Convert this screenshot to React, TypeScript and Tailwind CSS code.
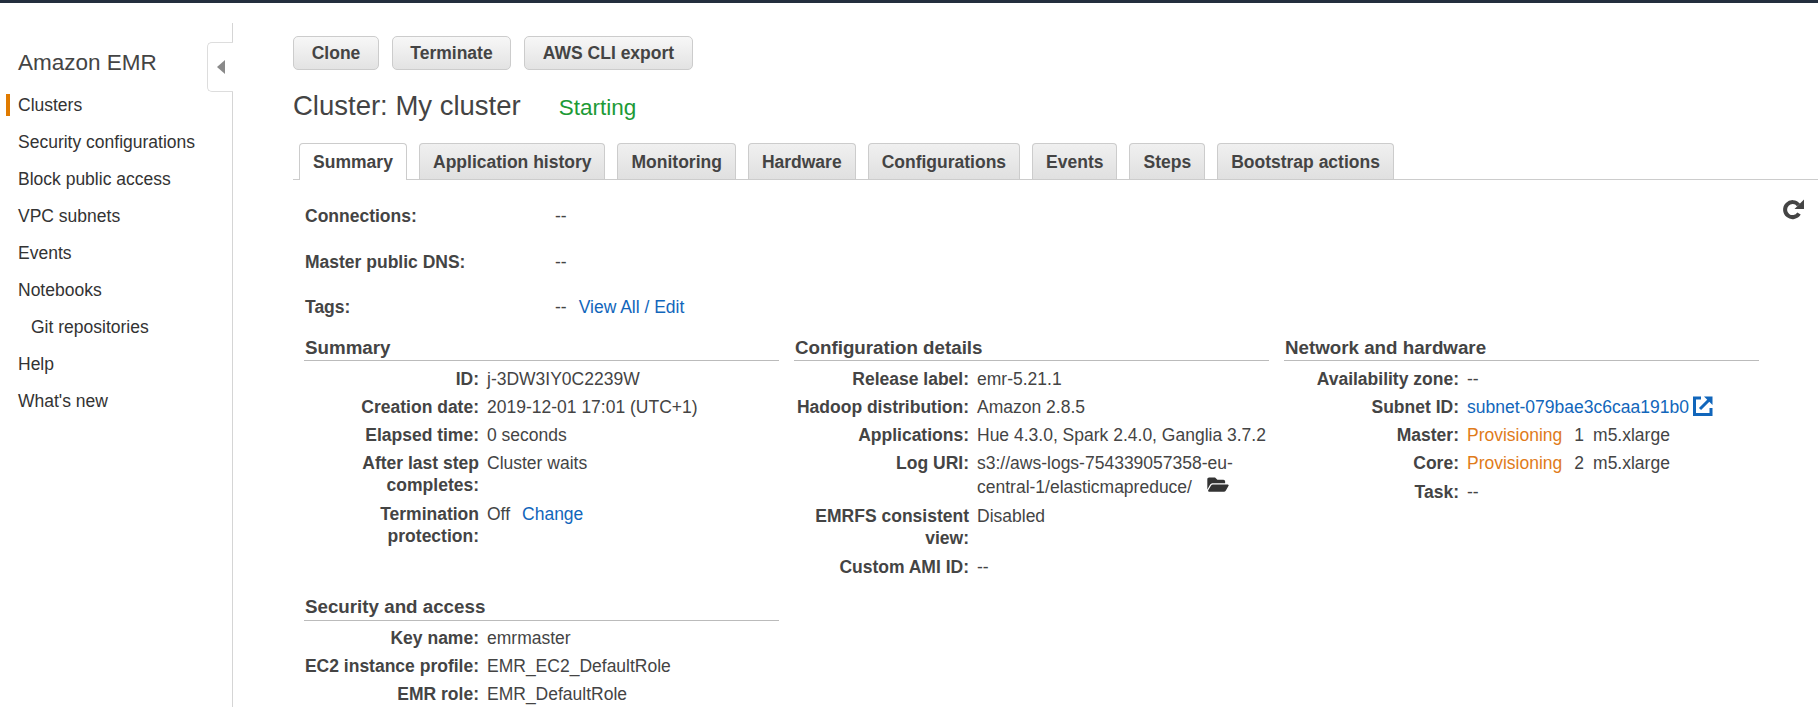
import { FaFolderOpen } from "react-icons/fa";
import type { ReactNode } from "react";

const navItems = ["Security configurations", "Block public access", "VPC subnets", "Events", "Notebooks"];
const tabs = ["Application history", "Monitoring", "Hardware", "Configurations", "Events", "Steps", "Bootstrap actions"];

function Row({ label, wrapped, children }: { label: ReactNode; wrapped?: boolean; children: ReactNode }) {
  return (
    <div className={`flex leading-[22px] ${wrapped ? "pb-[7px]" : "pb-[6px]"}`}>
      <div className="w-[175px] shrink-0 text-right font-bold">{label}</div>
      <div className="ml-[8px] min-w-0 flex-1">{children}</div>
    </div>
  );
}

function Section({ title, tall, children }: { title: string; tall?: boolean; children: ReactNode }) {
  return (
    <section>
      <h3 className={`${tall ? "h-[25px]" : "h-[24px]"} border-b border-[#bbbbbb] pl-px text-[18.75px] leading-[22px] font-bold`}>{title}</h3>
      <div className={tall ? "pt-[6px]" : "pt-[7px]"}>{children}</div>
    </section>
  );
}

function Button({ children, width }: { children: ReactNode; width: string }) {
  return (
    <button className={`h-[34px] ${width} rounded-[5px] border border-[#cccccc] bg-gradient-to-b from-[#f7f7f7] to-[#e3e3e3] text-[17.5px] font-bold text-[#444444]`}>
      {children}
    </button>
  );
}

function RefreshIcon() {
  return (
    <svg viewBox="0 0 22 22" className="mt-[18px] h-[22px] w-[22px] text-[#444444]">
      <path d="M16.5 7 A7.5 7.5 0 1 0 17 15.5" fill="none" stroke="currentColor" strokeWidth="4" />
      <polygon points="22,1.5 22,11 12.5,11" fill="currentColor" />
    </svg>
  );
}

function ExternalIcon() {
  return (
    <svg viewBox="0 0 20 20" className="ml-[4px] inline h-[20px] w-[20px] align-[-3px] text-[#1166bb]">
      <path d="M8 2 H1.5 V18.5 H18 V12" fill="none" stroke="currentColor" strokeWidth="3" />
      <path d="M7 13 L17 3" fill="none" stroke="currentColor" strokeWidth="3" />
      <polygon points="11,0.5 19.5,0.5 19.5,9" fill="currentColor" />
    </svg>
  );
}

export default function App() {
  return (
    <div className="flex h-[707px] flex-col overflow-hidden bg-white font-['Liberation_Sans',Arial,sans-serif] text-[17.5px] leading-[22px] text-[#444444]">
      <div className="h-[3px] shrink-0 bg-[#232f3e]" />
      <div className="flex flex-1">
        {/* Sidebar */}
        <aside className="relative mt-[20px] w-[233px] shrink-0 border-r border-[#d5d5d5]">
          <div className="absolute top-[19px] -right-px flex h-[50px] w-[26px] items-center justify-center rounded-l-[5px] border border-r-0 border-[#dddddd] bg-white">
            <div className="h-0 w-0 border-y-[7px] border-r-[8px] border-y-transparent border-r-[#8a8a8a]" />
          </div>
          <h2 className="mt-[25px] pl-[18px] text-[22.5px] leading-[30px] text-[#444444]">Amazon EMR</h2>
          <nav className="mt-[8px] text-[#333333]">
            <div className="flex h-[37px] items-center">
              <span className="ml-[6px] h-[22px] w-[4px] bg-[#e07b00]" />
              <span className="ml-[8px]">Clusters</span>
            </div>
            {navItems.map((item) => (
              <div key={item} className="flex h-[37px] items-center pl-[18px]">{item}</div>
            ))}
            <div className="flex h-[37px] items-center pl-[31px]">Git repositories</div>
            <div className="flex h-[37px] items-center pl-[18px]">Help</div>
            <div className="flex h-[37px] items-center pl-[18px]">What's new</div>
          </nav>
        </aside>

        {/* Main */}
        <main className="min-w-0 flex-1 pl-[60px]">
          <div className="mt-[33px] flex gap-[13px]">
            <Button width="w-[86px]">Clone</Button>
            <Button width="w-[119px]">Terminate</Button>
            <Button width="w-[169px]">AWS CLI export</Button>
          </div>
          <div className="mt-[19px] flex items-baseline">
            <h1 className="text-[27.5px] leading-[34px] font-normal">Cluster: My cluster</h1>
            <span className="ml-[38px] text-[22.5px] leading-[34px] text-[#1d9a36]">Starting</span>
          </div>
          <div className="mt-[18px] flex h-[37px] gap-[12px] border-b border-[#cccccc] pl-[6px]">
            <div className="relative z-10 flex h-[37px] w-[108px] items-center justify-center rounded-t-[4px] border border-b-0 border-[#cccccc] bg-white font-bold">Summary</div>
            {tabs.map((tab) => (
              <div key={tab} className="flex h-[36px] items-center rounded-t-[4px] border border-b-0 border-[#cccccc] bg-gradient-to-b from-[#f0f0f0] to-[#e0e0e0] px-[13px] font-bold whitespace-nowrap">
                {tab}
              </div>
            ))}
          </div>

          <div className="pl-[11px]">
            <div className="flex justify-between pr-[14px]">
              <div className="pt-[25px] pl-px">
                <div className="flex h-[46px]"><span className="w-[250px] font-bold">Connections:</span><span>--</span></div>
                <div className="flex h-[45px]"><span className="w-[250px] font-bold">Master public DNS:</span><span>--</span></div>
                <div className="flex h-[45px]"><span className="w-[250px] font-bold">Tags:</span><span>--</span><a className="ml-[12px] text-[#1166bb]">View All / Edit</a></div>
              </div>
              <RefreshIcon />
            </div>

            <div className="mt-[-4px] grid grid-cols-[475px_475px_475px] gap-x-[15px]">
              <div>
                <Section title="Summary">
                  <Row label="ID:">j-3DW3IY0C2239W</Row>
                  <Row label="Creation date:">2019-12-01 17:01 (UTC+1)</Row>
                  <Row label="Elapsed time:">0 seconds</Row>
                  <Row label="After last step completes:" wrapped>Cluster waits</Row>
                  <Row label="Termination protection:" wrapped>Off<a className="ml-[12px] text-[#1166bb]">Change</a></Row>
                </Section>
                <div className="mt-[42px]">
                  <Section title="Security and access" tall>
                    <Row label="Key name:">emrmaster</Row>
                    <Row label="EC2 instance profile:">EMR_EC2_DefaultRole</Row>
                    <Row label="EMR role:">EMR_DefaultRole</Row>
                  </Section>
                </div>
              </div>
              <Section title="Configuration details">
                <Row label="Release label:">emr-5.21.1</Row>
                <Row label="Hadoop distribution:">Amazon 2.8.5</Row>
                <Row label="Applications:">Hue 4.3.0, Spark 2.4.0, Ganglia 3.7.2</Row>
                <Row label="Log URI:">
                  <div className="leading-[23px]">
                    s3://aws-logs-754339057358-eu-central-1/elasticmapreduce/
                    <FaFolderOpen className="ml-[14px] inline h-[19px] w-[24px] align-[-1px] text-[#333333]" />
                  </div>
                </Row>
                <Row label="EMRFS consistent view:" wrapped>Disabled</Row>
                <Row label="Custom AMI ID:">--</Row>
              </Section>
              <Section title="Network and hardware">
                <Row label="Availability zone:">--</Row>
                <Row label="Subnet ID:">
                  <a className="text-[#1166bb]">subnet-079bae3c6caa191b0</a>
                  <ExternalIcon />
                </Row>
                <Row label="Master:"><span className="text-[#e07b1a]">Provisioning</span><span className="ml-[12px]">1</span><span className="ml-[9px]">m5.xlarge</span></Row>
                <Row label="Core:"><span className="text-[#e07b1a]">Provisioning</span><span className="ml-[12px]">2</span><span className="ml-[9px]">m5.xlarge</span></Row>
                <div className="pt-px">
                  <Row label="Task:">--</Row>
                </div>
              </Section>
            </div>
          </div>
        </main>
      </div>
    </div>
  );
}
